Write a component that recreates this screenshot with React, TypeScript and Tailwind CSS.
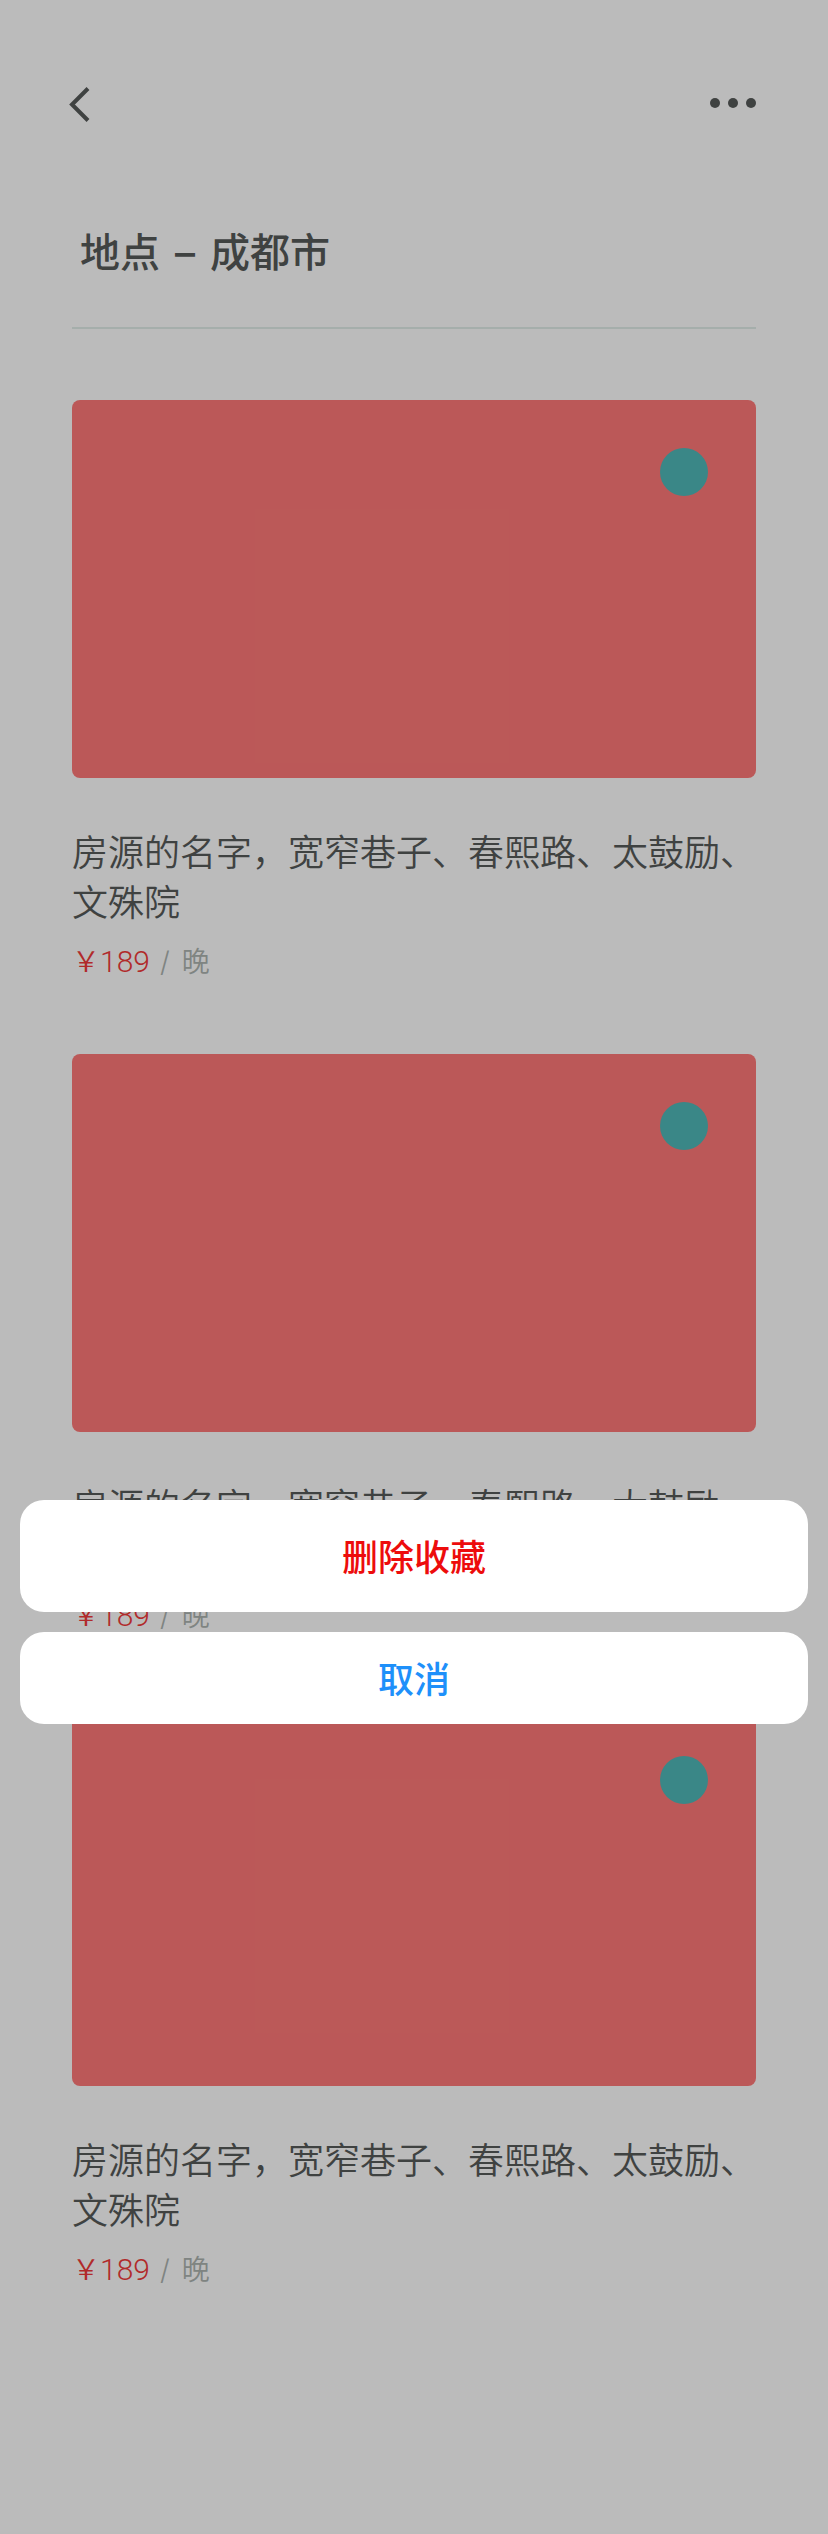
import { useState } from "react";

const listings = [1, 2, 3].map((id) => ({
  id,
  name: "房源的名字，宽窄巷子、春熙路、太鼓励、文殊院",
  price: 189,
}));

function TopBar() {
  return (
    <header className="flex h-12 items-center justify-between px-[68px]">
      <button type="button" aria-label="返回" className="flex h-12 items-center">
        <svg width="24" height="36" viewBox="0 0 24 36" fill="none" stroke="#575a59" strokeWidth="4">
          <path d="M20 2.5 4 18.5 20 34.5" />
        </svg>
      </button>
      <button type="button" aria-label="更多" className="flex h-12 items-center">
        <svg width="52" height="12" viewBox="0 0 52 12" fill="#575a59">
          <circle cx="7" cy="5" r="5" />
          <circle cx="25" cy="5" r="5" />
          <circle cx="43" cy="5" r="5" />
        </svg>
      </button>
    </header>
  );
}

function Listing({ name, price }: { name: string; price: number }) {
  return (
    <li>
      <div className="flex h-[378px] items-start justify-end rounded-lg bg-[#ff7978] p-12">
        <button type="button" aria-label="收藏" className="size-12 rounded-full bg-[#50b8b9]" />
      </div>
      <h2 className="mt-[50px] text-4xl/[50px] font-[350] text-[#575a59]">{name}</h2>
      <p className="mt-3.5 flex h-10 items-center gap-2.5 text-[28px]/10 font-[350]">
        <span className="flex text-[#f23a3a]">
          <span>￥</span>
          <span className="font-['Roboto',sans-serif] text-3xl/10 font-light">{price}</span>
        </span>
        <span className="flex gap-3 text-[#adb4b1]">
          <span className="font-light">/</span>
          <span>晚</span>
        </span>
      </p>
    </li>
  );
}

export default function App() {
  const [open, setOpen] = useState(true);

  return (
    <div className="relative min-h-[2534px] bg-white font-['Inter','Noto_Sans_CJK_SC',sans-serif]">
      <div className="pt-20">
        <TopBar />
        <main className="px-[72px]">
          <h1 className="flex gap-[15px] border-b-2 border-[#e2edea] px-2 pt-[97px] pb-[46px] text-[40px]/[56px] font-medium text-[#575a59]">
            <span>地点</span>
            <span>–</span>
            <span>成都市</span>
          </h1>
          <ul className="flex flex-col gap-[72px] pt-[71px]">
            {listings.map((item) => (
              <Listing key={item.id} name={item.name} price={item.price} />
            ))}
          </ul>
        </main>
      </div>

      {open && (
        <div className="absolute inset-0 bg-[#00000044] px-5 pt-[1500px]">
          <div role="dialog" aria-label="收藏操作" className="flex flex-col gap-5 text-4xl font-medium">
            <button type="button" onClick={() => setOpen(false)} className="h-28 rounded-3xl bg-white pt-1 text-[#ed0c0c]">
              删除收藏
            </button>
            <button type="button" onClick={() => setOpen(false)} className="h-[92px] rounded-3xl bg-white pt-1 text-[#1e90fa]">
              取消
            </button>
          </div>
        </div>
      )}
    </div>
  );
}
